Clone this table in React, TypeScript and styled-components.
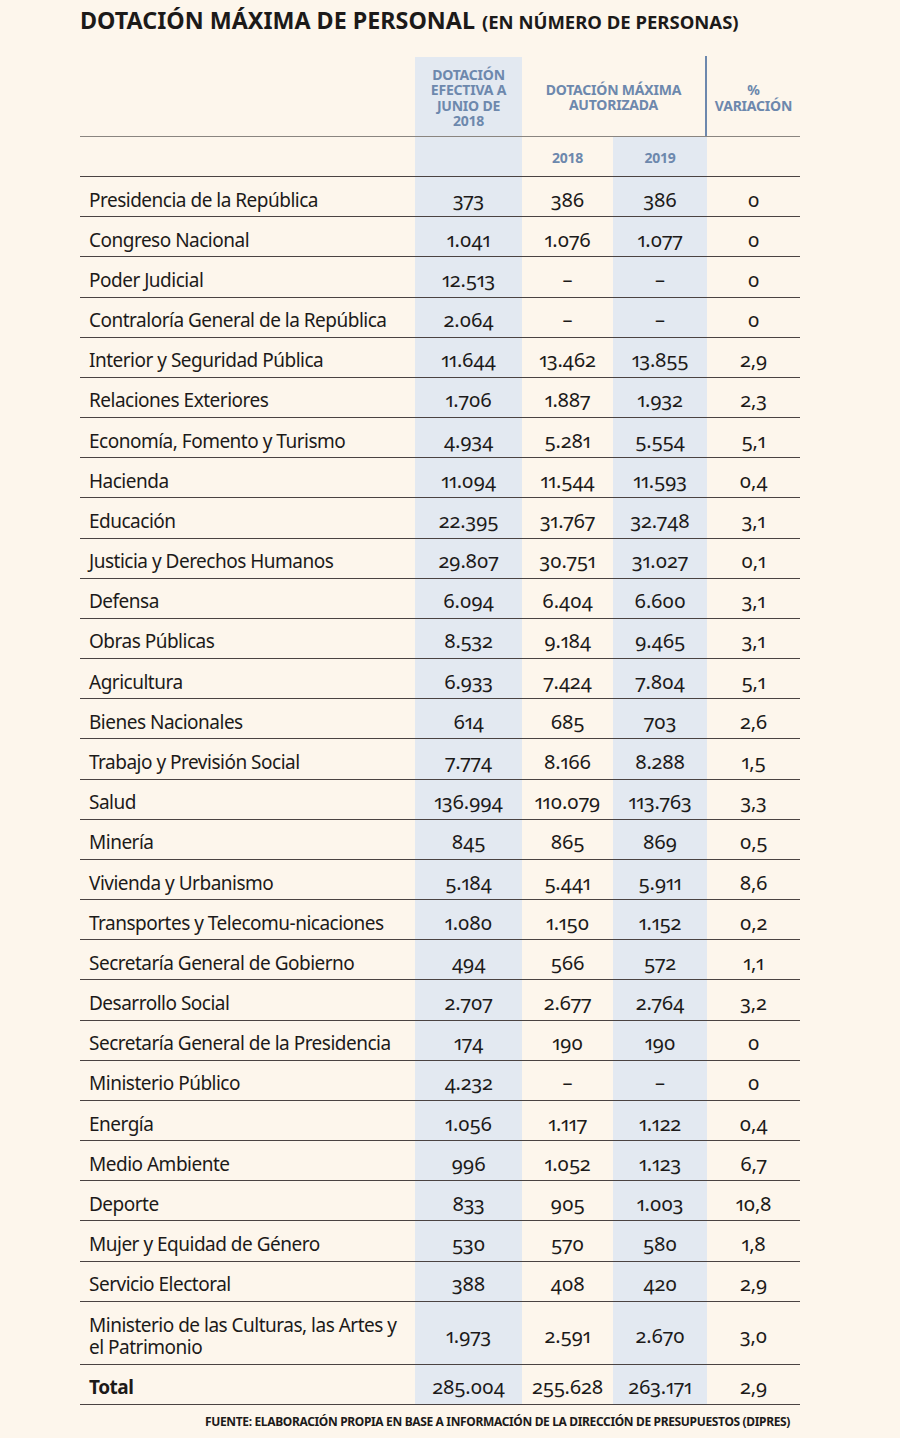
import React from "react";
import styled, { createGlobalStyle } from "styled-components";

const Global = createGlobalStyle`
  html, body { margin: 0; padding: 0; background: #fdf6ec; }
  body { font-family: "Noto Sans", "Open Sans", sans-serif; color: #1c1a19; }
`;

const COLS = "335px 107px 91px 94px 93px";
const SHADE = "#e3e9f1";
const BLUE = "#6d88ad";

const Page = styled.div`
  width: 900px;
  height: 1438px;
  box-sizing: border-box;
  padding: 0 100px 0 80px;
`;

const Title = styled.h1`
  margin: 0;
  height: 57px;
  padding-top: 5px;
  box-sizing: border-box;
  font-family: "Noto Sans", sans-serif;
  font-weight: 700;
  font-size: 23.3px;
  line-height: 30px;
  white-space: nowrap;
`;

const Sub = styled.span`
  font-size: 18.5px;
  margin-left: 7px;
`;

const HeadRow = styled.div`
  display: grid;
  grid-template-columns: ${COLS};
  height: 80px;
  border-bottom: 1px solid #8a8580;
  box-sizing: border-box;
`;

const SubHeadRow = styled.div`
  display: grid;
  grid-template-columns: ${COLS};
  height: 40px;
  border-bottom: 1px solid #4a4342;
  box-sizing: border-box;
`;

const HeadCell = styled.div<{ $shade?: boolean; $span?: number; $rule?: boolean }>`
  background: ${(p) => (p.$shade ? SHADE : "transparent")};
  grid-column: span ${(p) => p.$span ?? 1};
  display: flex;
  align-items: center;
  justify-content: center;
  text-align: center;
  font-family: "Noto Sans", sans-serif;
  font-stretch: condensed;
  font-weight: 700;
  font-size: 14px;
  line-height: 15.4px;
  color: ${BLUE};
  letter-spacing: -0.2px;
  border-right: ${(p) => (p.$rule ? `2px solid ${BLUE}` : "none")};
  margin-top: ${(p) => (p.$rule ? "-1px" : "0")};
  padding-top: 2px;
`;

const Row = styled.div<{ $tall?: boolean }>`
  display: grid;
  grid-template-columns: ${COLS};
  height: ${(p) => (p.$tall ? "63px" : "40.18px")};
  border-bottom: 1px solid #4a4342;
  box-sizing: border-box;
`;

const Label = styled.div<{ $bold?: boolean }>`
  display: flex;
  align-items: center;
  padding: 6px 0 0 9px;
  font-family: "Noto Sans", sans-serif;
  font-stretch: semi-condensed;
  font-size: 19px;
  line-height: 22px;
  font-weight: ${(p) => (p.$bold ? 700 : 400)};
  letter-spacing: -0.5px;
`;

const Num = styled.div<{ $shade?: boolean }>`
  background: ${(p) => (p.$shade ? SHADE : "transparent")};
  display: flex;
  align-items: center;
  justify-content: center;
  padding-top: 5px;
  font-family: "Noto Sans", sans-serif;
  font-stretch: semi-condensed;
  font-size: 20px;
  font-variant-numeric: oldstyle-nums proportional-nums;
  letter-spacing: -0.2px;
`;

const Footer = styled.div`
  text-align: right;
  padding: 8px 10px 0 0;
  font-family: "Noto Sans", sans-serif;
  font-stretch: condensed;
  font-weight: 700;
  font-size: 12px;
  letter-spacing: -0.35px;
  white-space: nowrap;
`;

type R = [string, string, string, string, string];

const rows: R[] = [
  ["Presidencia de la República", "373", "386", "386", "0"],
  ["Congreso Nacional", "1.041", "1.076", "1.077", "0"],
  ["Poder Judicial", "12.513", "–", "–", "0"],
  ["Contraloría General de la República", "2.064", "–", "–", "0"],
  ["Interior y Seguridad Pública", "11.644", "13.462", "13.855", "2,9"],
  ["Relaciones Exteriores", "1.706", "1.887", "1.932", "2,3"],
  ["Economía, Fomento y Turismo", "4.934", "5.281", "5.554", "5,1"],
  ["Hacienda", "11.094", "11.544", "11.593", "0,4"],
  ["Educación", "22.395", "31.767", "32.748", "3,1"],
  ["Justicia y Derechos Humanos", "29.807", "30.751", "31.027", "0,1"],
  ["Defensa", "6.094", "6.404", "6.600", "3,1"],
  ["Obras Públicas", "8.532", "9.184", "9.465", "3,1"],
  ["Agricultura", "6.933", "7.424", "7.804", "5,1"],
  ["Bienes Nacionales", "614", "685", "703", "2,6"],
  ["Trabajo y Previsión Social", "7.774", "8.166", "8.288", "1,5"],
  ["Salud", "136.994", "110.079", "113.763", "3,3"],
  ["Minería", "845", "865", "869", "0,5"],
  ["Vivienda y Urbanismo", "5.184", "5.441", "5.911", "8,6"],
  ["Transportes y Telecomu-nicaciones", "1.080", "1.150", "1.152", "0,2"],
  ["Secretaría General de Gobierno", "494", "566", "572", "1,1"],
  ["Desarrollo Social", "2.707", "2.677", "2.764", "3,2"],
  ["Secretaría General de la Presidencia", "174", "190", "190", "0"],
  ["Ministerio Público", "4.232", "–", "–", "0"],
  ["Energía", "1.056", "1.117", "1.122", "0,4"],
  ["Medio Ambiente", "996", "1.052", "1.123", "6,7"],
  ["Deporte", "833", "905", "1.003", "10,8"],
  ["Mujer y Equidad de Género", "530", "570", "580", "1,8"],
  ["Servicio Electoral", "388", "408", "420", "2,9"],
];

function DataRow({ r, tall, bold }: { r: R; tall?: boolean; bold?: boolean }) {
  return (
    <Row $tall={tall}>
      <Label $bold={bold}>{r[0]}</Label>
      <Num $shade>{r[1]}</Num>
      <Num>{r[2]}</Num>
      <Num $shade>{r[3]}</Num>
      <Num>{r[4]}</Num>
    </Row>
  );
}

export default function App() {
  return (
    <Page>
      <Global />
      <Title>
        DOTACIÓN MÁXIMA DE PERSONAL<Sub>(EN NÚMERO DE PERSONAS)</Sub>
      </Title>
      <HeadRow>
        <HeadCell />
        <HeadCell $shade>
          DOTACIÓN
          <br />
          EFECTIVA A
          <br />
          JUNIO DE
          <br />
          2018
        </HeadCell>
        <HeadCell $span={2} $rule>
          DOTACIÓN MÁXIMA
          <br />
          AUTORIZADA
        </HeadCell>
        <HeadCell>
          %
          <br />
          VARIACIÓN
        </HeadCell>
      </HeadRow>
      <SubHeadRow>
        <HeadCell />
        <HeadCell $shade />
        <HeadCell>2018</HeadCell>
        <HeadCell $shade>2019</HeadCell>
        <HeadCell />
      </SubHeadRow>
      {rows.map((r) => (
        <DataRow key={r[0]} r={r} />
      ))}
      <DataRow
        tall
        r={[
          "Ministerio de las Culturas, las Artes y el Patrimonio",
          "1.973",
          "2.591",
          "2.670",
          "3,0",
        ]}
      />
      <DataRow bold r={["Total", "285.004", "255.628", "263.171", "2,9"]} />
      <Footer>
        FUENTE: ELABORACIÓN PROPIA EN BASE A INFORMACIÓN DE LA DIRECCIÓN DE PRESUPUESTOS (DIPRES)
      </Footer>
    </Page>
  );
}
